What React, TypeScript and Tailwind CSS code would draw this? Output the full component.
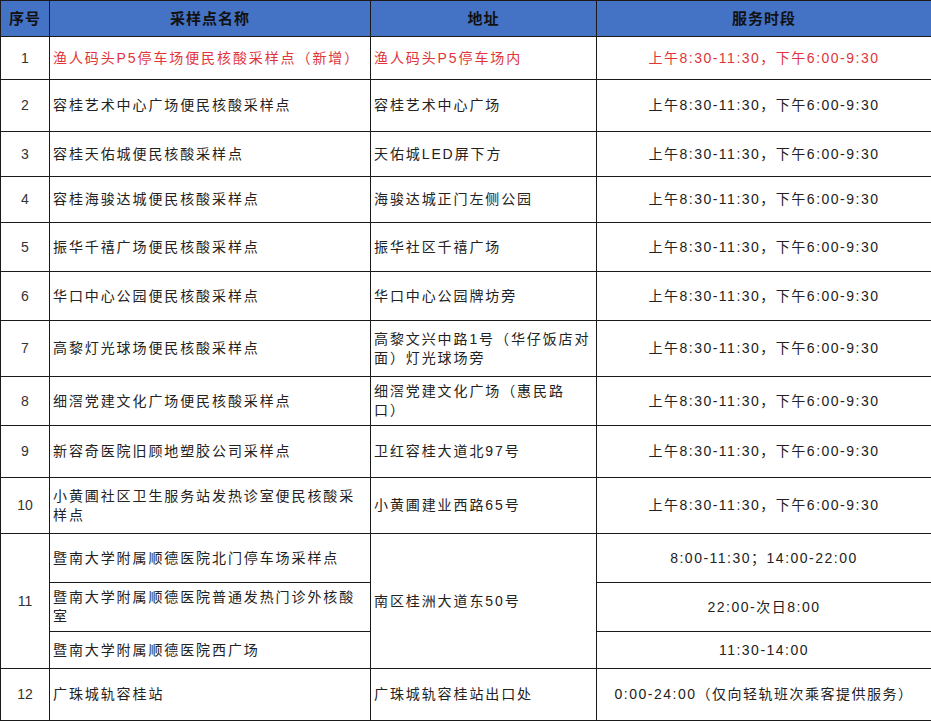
import React from "react";

type Row = {
  no: string;
  name: string;
  addr: string;
  time: string;
  h: string;
  red?: boolean;
};

const rows: Row[] = [
  { no: "1", name: "渔人码头P5停车场便民核酸采样点（新增）", addr: "渔人码头P5停车场内", time: "上午8:30-11:30，下午6:00-9:30", h: "h-[43px]", red: true },
  { no: "2", name: "容桂艺术中心广场便民核酸采样点", addr: "容桂艺术中心广场", time: "上午8:30-11:30，下午6:00-9:30", h: "h-[52px]" },
  { no: "3", name: "容桂天佑城便民核酸采样点", addr: "天佑城LED屏下方", time: "上午8:30-11:30，下午6:00-9:30", h: "h-[45px]" },
  { no: "4", name: "容桂海骏达城便民核酸采样点", addr: "海骏达城正门左侧公园", time: "上午8:30-11:30，下午6:00-9:30", h: "h-[46px]" },
  { no: "5", name: "振华千禧广场便民核酸采样点", addr: "振华社区千禧广场", time: "上午8:30-11:30，下午6:00-9:30", h: "h-[49px]" },
  { no: "6", name: "华口中心公园便民核酸采样点", addr: "华口中心公园牌坊旁", time: "上午8:30-11:30，下午6:00-9:30", h: "h-[49px]" },
  { no: "7", name: "高黎灯光球场便民核酸采样点", addr: "高黎文兴中路1号（华仔饭店对面）灯光球场旁", time: "上午8:30-11:30，下午6:00-9:30", h: "h-[56px]" },
  { no: "8", name: "细滘党建文化广场便民核酸采样点", addr: "细滘党建文化广场（惠民路\n口）", time: "上午8:30-11:30，下午6:00-9:30", h: "h-[49px]" },
  { no: "9", name: "新容奇医院旧顾地塑胶公司采样点", addr: "卫红容桂大道北97号", time: "上午8:30-11:30，下午6:00-9:30", h: "h-[52px]" },
  { no: "10", name: "小黄圃社区卫生服务站发热诊室便民核酸采样点", addr: "小黄圃建业西路65号", time: "上午8:30-11:30，下午6:00-9:30", h: "h-[56px]" },
];

const sub = [
  { name: "暨南大学附属顺德医院北门停车场采样点", time: "8:00-11:30；14:00-22:00", h: "h-[49px]" },
  { name: "暨南大学附属顺德医院普通发热门诊外核酸室", time: "22:00-次日8:00", h: "h-[49px]" },
  { name: "暨南大学附属顺德医院西广场", time: "11:30-14:00", h: "h-[37px]" },
];

const cell = "border border-[#1a1a1a] align-middle leading-[19px]";

export default function App() {
  return (
    <div
      className="w-[931px] h-[721px] bg-white overflow-hidden text-[14px] text-[#222] tracking-[1.9px]"
      style={{ fontFamily: '"Liberation Sans", "Noto Sans CJK SC", sans-serif' }}
    >
      <table className="w-[931px] border-collapse table-fixed">
        <colgroup>
          <col className="w-[49px]" />
          <col className="w-[321px]" />
          <col className="w-[226px]" />
          <col className="w-[335px]" />
        </colgroup>
        <thead>
          <tr className="h-[36px] bg-[#4472c4] text-[15px] font-bold text-[#111] tracking-[1px]">
            <th className={cell}>序号</th>
            <th className={cell}>采样点名称</th>
            <th className={cell}>地址</th>
            <th className={cell}>服务时段</th>
          </tr>
        </thead>
        <tbody>
          {rows.map((r) => (
            <tr key={r.no} className={`${r.h} ${r.red ? "text-[#e0353b]" : ""}`}>
              <td className={`${cell} text-center tracking-normal text-[#333]`}>{r.no}</td>
              <td className={`${cell} px-[3px]`}>{r.name}</td>
              <td className={`${cell} px-[3px] whitespace-pre-line`}>{r.addr}</td>
              <td className={`${cell} text-center tracking-[1.5px]`}>{r.time}</td>
            </tr>
          ))}
          {sub.map((s, i) => (
            <tr key={s.name} className={s.h}>
              {i === 0 && (
                <td rowSpan={3} className={`${cell} text-center tracking-normal text-[#333]`}>
                  11
                </td>
              )}
              <td className={`${cell} px-[3px]`}>{s.name}</td>
              {i === 0 && (
                <td rowSpan={3} className={`${cell} px-[3px]`}>
                  南区桂洲大道东50号
                </td>
              )}
              <td className={`${cell} text-center tracking-[1.5px]`}>{s.time}</td>
            </tr>
          ))}
          <tr className="h-[52px]">
            <td className={`${cell} text-center tracking-normal text-[#333]`}>12</td>
            <td className={`${cell} px-[3px]`}>广珠城轨容桂站</td>
            <td className={`${cell} px-[3px]`}>广珠城轨容桂站出口处</td>
            <td className={`${cell} text-center tracking-[1.5px]`}>0:00-24:00（仅向轻轨班次乘客提供服务）</td>
          </tr>
        </tbody>
      </table>
    </div>
  );
}
